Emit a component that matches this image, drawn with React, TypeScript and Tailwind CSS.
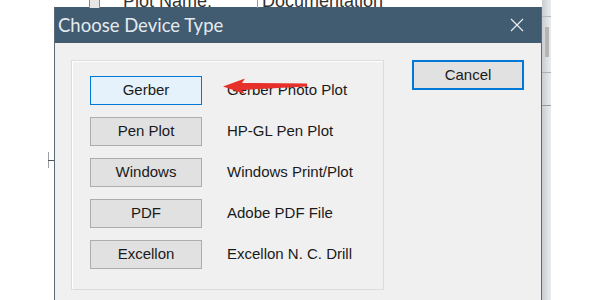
import React from 'react';

const devices = [
  { name: 'Gerber', desc: 'Gerber Photo Plot', focused: true },
  { name: 'Pen Plot', desc: 'HP-GL Pen Plot' },
  { name: 'Windows', desc: 'Windows Print/Plot' },
  { name: 'PDF', desc: 'Adobe PDF File' },
  { name: 'Excellon', desc: 'Excellon N. C. Drill' },
];

const font = { fontFamily: '"Liberation Sans", Arial, sans-serif' };

const App: React.FC = () => {
  return (
    <div className="relative w-[600px] h-[300px] overflow-hidden bg-white" style={font}>
      {/* window behind the dialog */}
      <div className="absolute left-[89px] top-0 w-[11px] h-[8px] border-l border-r border-[#8a8a8a] bg-[#e6e6e6]" />
      <div className="absolute left-[123px] top-[-12px] text-[18px] text-[#333]">Plot Name:</div>
      <div className="absolute left-[257px] top-0 w-[300px] h-[8px] border-l border-[#9a9a9a]" />
      <div className="absolute left-[262px] top-[-12px] text-[18px] text-[#333]">Documentation</div>
      <div className="absolute left-[48px] top-[152px] h-[16px] border-l border-[#9aa0a6]" />
      <div className="absolute left-[48px] top-[160px] w-[6px] border-t border-[#555]" />
      <div className="absolute left-[542px] top-0 w-[9px] h-[300px] bg-gradient-to-r from-[#c9cdd1] to-[#ececec]">
        <div className="h-[17px] border-b border-[#b8b8b8]" />
        <div className="ml-[3px] mt-[10px] w-[4px] h-[30px] bg-[#b5b5b5]" />
        <div className="mt-[15px] border-b border-[#b0b0b0]" />
        <div className="mt-[32px] border-b border-[#9a9a9a]" />
      </div>

      {/* dialog */}
      <div className="pl-[54px] pt-[7px]">
        <div className="w-[488px] h-[320px] border-x border-[#5d6b77] bg-[#f0f0f0]">
          <div className="h-[36px] bg-[#415b70] flex items-center justify-between pl-[3px] pr-[17px]">
            <span
              className="text-[18.5px] text-[#e4eaef] leading-none"
              style={{ fontFamily: 'Lato, "Liberation Sans", sans-serif' }}
            >
              Choose Device Type
            </span>
            <svg width="14" height="14" viewBox="0 0 14 14" className="text-[#e9eef2]">
              <path d="M1 1 L13 13 M13 1 L1 13" stroke="currentColor" strokeWidth="1.2" fill="none" />
            </svg>
          </div>
          <div className="flex pl-[16px] pt-[17px]">
            <div className="w-[313px] h-[230px] border border-[#dcdcdc] shadow-[inset_1px_1px_0_#ffffff] pl-[18px] pt-[15px] flex flex-col gap-[12px]">
              {devices.map((d) => (
                <div key={d.name} className="flex items-center">
                  <button
                    className={
                      d.focused
                        ? 'w-[112px] h-[29px] border border-[#0078d7] bg-[#e5f1fb] text-[15px] text-[#1a1a1a]'
                        : 'w-[112px] h-[29px] border border-[#adadad] bg-[#e1e1e1] text-[15px] text-[#1a1a1a]'
                    }
                  >
                    {d.name}
                  </button>
                  <span className="ml-[25px] text-[15px] text-[#1a1a1a]">{d.desc}</span>
                </div>
              ))}
            </div>
            <button className="ml-[28px] w-[112px] h-[30px] border-2 border-[#0078d7] bg-[#e1e1e1] text-[15px] text-[#1a1a1a]">
              Cancel
            </button>
          </div>
        </div>
      </div>

      {/* red annotation arrow */}
      <svg className="absolute left-0 top-0" width="600" height="300" viewBox="0 0 600 300">
        <path d="M223 86.5 L245 78.5 L242 83 L307 83.5 L307 86.5 L242 90 L245 94 Z" fill="#e8302a" />
      </svg>
    </div>
  );
};

export default App;
